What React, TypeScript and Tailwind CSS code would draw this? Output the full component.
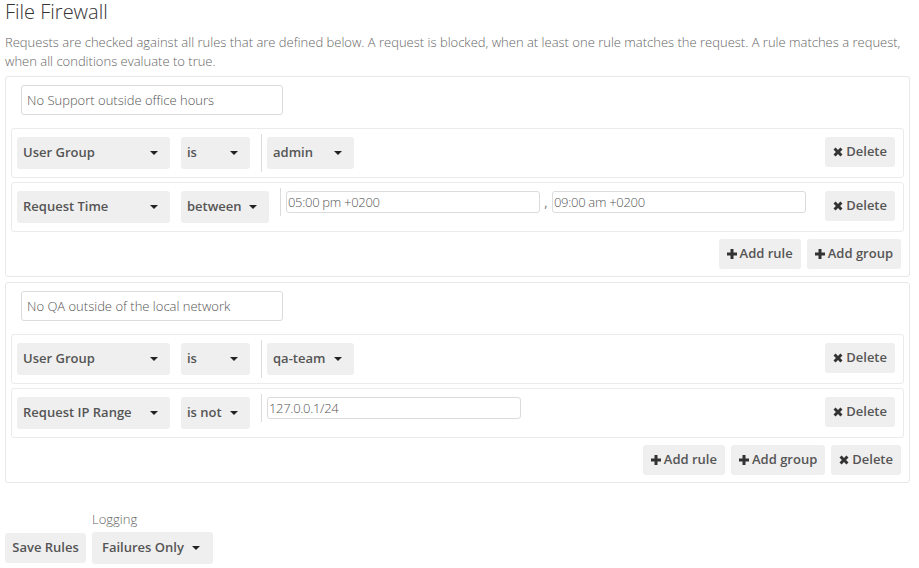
import React from 'react';

type Rule = {
  check: string;
  op: string;
  opWidth?: string;
  value: React.ReactNode;
};

const Caret = () => (
  <span className="inline-block w-0 h-0 border-x-[4px] border-x-transparent border-t-[4px] border-t-[#222] shrink-0" />
);

const PlusIcon = () => (
  <svg width="10" height="10" viewBox="0 0 10 10" className="shrink-0">
    <path d="M3.5 0h3v3.5H10v3H6.5V10h-3V6.5H0v-3h3.5z" fill="#333" />
  </svg>
);

const CrossIcon = () => (
  <svg width="10" height="10" viewBox="0 0 10 10" className="shrink-0">
    <path d="M0.5 2.6 2.6 0.5 5 2.9 7.4 0.5 9.5 2.6 7.1 5 9.5 7.4 7.4 9.5 5 7.1 2.6 9.5 0.5 7.4 2.9 5z" fill="#333" />
  </svg>
);

const Button = ({ children, className = '' }: { children: React.ReactNode; className?: string }) => (
  <button
    type="button"
    className={`h-[30px] px-[8px] rounded-[3px] bg-[#efefef] text-[13px] font-semibold text-[#555] flex items-center gap-[3px] whitespace-nowrap shrink-0 ${className}`}
  >
    {children}
  </button>
);

const Select = ({ label, className = '' }: { label: string; className?: string }) => (
  <button
    type="button"
    className={`h-[32px] pl-[6px] pr-[12px] rounded-[3px] bg-[#efefef] text-[13px] font-semibold text-[#555] flex items-center justify-between gap-[7px] whitespace-nowrap shrink-0 ${className}`}
  >
    <span>{label}</span>
    <Caret />
  </button>
);

const ValueInput = ({ value }: { value: string }) => (
  <input
    readOnly
    value={value}
    className="w-[254px] h-[22px] px-[1px] border border-[#dbdbdb] rounded-[3px] text-[13px] font-light tracking-[-0.3px] text-[#555] outline-none bg-white"
  />
);

const RuleRow = ({ rule }: { rule: Rule }) => (
  <div className="mx-[5px] border border-[#ebebeb] rounded-[3px] px-[5px] py-[8px] flex items-start">
    <Select label={rule.check} className="w-[153px]" />
    <Select label={rule.op} className={`ml-[11px] ${rule.opWidth ?? 'w-[69px]'}`} />
    <div className="ml-[11px] -my-[3px] py-[3px] pl-[5px] border-l border-[#dcdcdc] flex items-start">
      {rule.value}
    </div>
    <Button className="ml-auto mr-[3px]">
      <CrossIcon />
      Delete
    </Button>
  </div>
);

const Group = ({ name, rules, deletable }: { name: string; rules: Rule[]; deletable?: boolean }) => (
  <div className="border border-[#e8e8e8] rounded-[3px] pt-[8px] pb-[7px]">
    <input
      readOnly
      value={name}
      className="block ml-[15px] w-[262px] h-[30px] px-[5px] border border-[#dbdbdb] rounded-[3px] text-[13px] font-light text-[#555] outline-none bg-white"
    />
    <div className="mt-[13px] flex flex-col gap-[4px]">
      {rules.map((r, i) => (
        <RuleRow key={i} rule={r} />
      ))}
    </div>
    <div className="mt-[7px] mr-[8px] flex justify-end gap-[6px]">
      <Button>
        <PlusIcon />
        Add rule
      </Button>
      <Button>
        <PlusIcon />
        Add group
      </Button>
      {deletable && (
        <Button>
          <CrossIcon />
          Delete
        </Button>
      )}
    </div>
  </div>
);

const groups = [
  {
    name: 'No Support outside office hours',
    deletable: false,
    rules: [
      { check: 'User Group', op: 'is', value: <Select label="admin" className="w-[87px]" /> },
      {
        check: 'Request Time',
        op: 'between',
        opWidth: 'w-[88px]',
        value: (
          <>
            <ValueInput value="05:00 pm +0200" />
            <span className="w-[12px] text-center text-[13px] text-[#777] leading-[22px]">,</span>
            <ValueInput value="09:00 am +0200" />
          </>
        ),
      },
    ],
  },
  {
    name: 'No QA outside of the local network',
    deletable: true,
    rules: [
      { check: 'User Group', op: 'is', value: <Select label="qa-team" className="w-[87px]" /> },
      { check: 'Request IP Range', op: 'is not', value: <ValueInput value="127.0.0.1/24" /> },
    ],
  },
];

export default function App() {
  return (
    <div className="min-h-screen bg-white pl-[5px] pr-[9px] pt-[1px] font-['Open_Sans',sans-serif]">
      <h2 className="text-[20px] font-light text-[#333] leading-[22px]">File Firewall</h2>
      <p className="mt-[10px] text-[13px] leading-[19px] font-light text-[#666]">
        Requests are checked against all rules that are defined below. A request is blocked, when at least one rule
        matches the request. A rule matches a request, when all conditions evaluate to true.
      </p>
      <div className="mt-[5px] flex flex-col gap-[5px]">
        {groups.map((g, i) => (
          <Group key={i} name={g.name} rules={g.rules} deletable={g.deletable} />
        ))}
      </div>
      <div className="mt-[27px] flex items-end gap-[6px]">
        <Button className="w-[81px] justify-center mb-[1px]">Save Rules</Button>
        <div className="flex flex-col">
          <span className="text-[13px] leading-[18px] font-light text-[#666] mb-[4px]">Logging</span>
          <Select label="Failures Only" className="w-[121px] pl-[10px] pr-[13px]" />
        </div>
      </div>
    </div>
  );
}
